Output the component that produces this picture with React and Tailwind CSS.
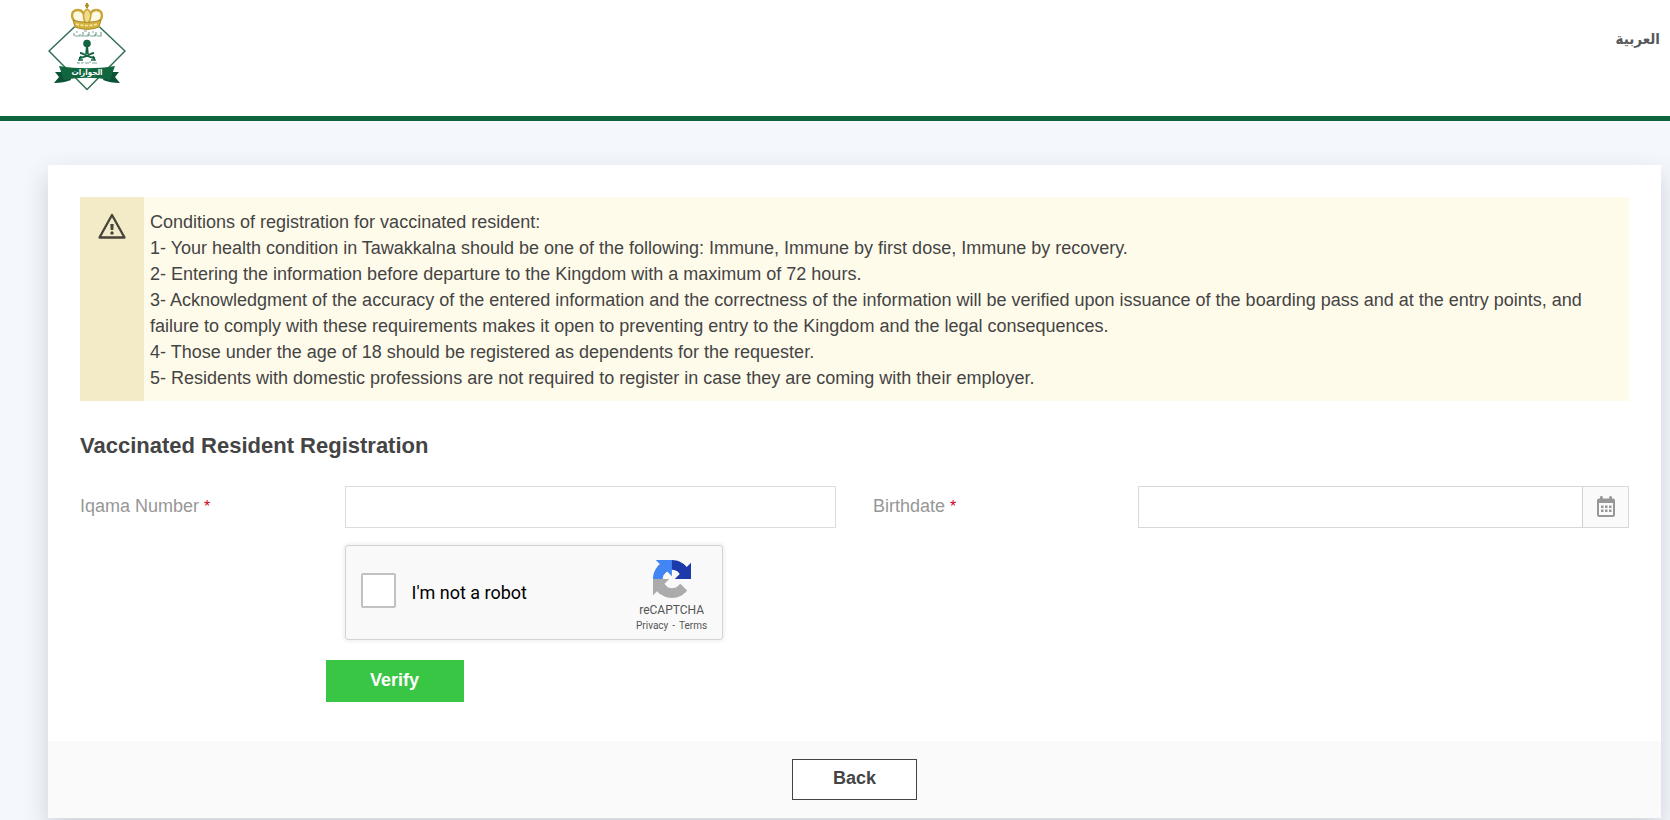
import React from "react";

function Emblem() {
  return (
    <svg viewBox="0 0 78 88" className="h-[88px] w-[78px]" role="img" aria-label="Passports emblem">
      <path d="M39 12 77 48 39 86.500 1 48Z" fill="#fff" stroke="#2f6f52" strokeWidth="1.5" />
      {/* crown */}
      <path d="M26 14h26v10H26Z" fill="#fff" />
      <path d="M28 19c-6-4-5-12 2-12 5 0 7 4 7 12M50 19c6-4 5-12-2-12-5 0-7 4-7 12" fill="#fdf8e2" stroke="#c9a637" strokeWidth="2.4" />
      <path d="M36.500 18c-2-5-1-10 2.500-12 4 2 5 7 2.500 12" fill="#f0dc8a" stroke="#c9a637" strokeWidth="1.600" />
      <path d="M39 0v5M37 2.500h4" stroke="#b28e22" strokeWidth="2" />
      <path d="M25 17c9 3 19 3 28 0l-2 7c-8 3-16 3-24 0Z" fill="#d4b23e" stroke="#a98722" strokeWidth="1" />
      <path d="M28 21c7 2 15 2 22 0" fill="none" stroke="#f6e8a6" strokeWidth="1.6" strokeDasharray="3 1.500" />
      {/* upper inscription */}
      <path d="M26 33v-3M27 33h5v-2M33 33h2v-4M36 33h4v-2M41 33v-4M42 33h5v-2M48 33v-4M49 33h4v-4M28 29h2M36 28h3M44 29h2" fill="none" stroke="#7fa594" strokeWidth="1.200" />
      {/* palm */}
      <circle cx="39" cy="40.500" r="3.800" fill="#12623f" />
      <path d="M38 43h2l.8 8h-3.600Z" fill="#12623f" />
      {/* crossed swords */}
      <path d="M32 50c4 0 8 5 15 5M46 50c-4 0-8 5-15 5" fill="none" stroke="#12623f" strokeWidth="1.800" />
      <path d="M33 53l-2 4h4M45 53l2 4h-4" fill="none" stroke="#12623f" strokeWidth="1.400" />
      {/* lower inscription */}
      <path d="M29 60h3M33 60h2v-1M37 60h4M42 60v-2M44 60h5M30 59v1" fill="none" stroke="#7fa594" strokeWidth="1" />
      {/* ribbon */}
      <path d="M14 69H7l4 5-5 6c7 0 12-1 17-3l-3-8Z" fill="#0c5234" />
      <path d="M64 69h7l-4 5 5 6c-7 0-12-1-17-3l3-8Z" fill="#0c5234" />
      <path d="M11 63c18 3 38 3 56 0l-5 14c-15-3-31-3-46 0Z" fill="#12663f" />
      <text x="39" y="72" textAnchor="middle" fill="#fff" fontSize="8" fontWeight="700" fontFamily="DejaVu Sans Condensed, DejaVu Sans, sans-serif">الجوازات</text>
    </svg>
  );
}

function WarningIcon() {
  return (
    <svg viewBox="0 0 28 26" className="h-[26px] w-7" aria-hidden="true">
      <path d="M14 2 26.500 24.500h-25Z" fill="none" stroke="#45443a" strokeWidth="2.300" strokeLinejoin="round" />
      <path d="M12.300 11h3.400l-.4 6h-2.600Z" fill="#45443a" />
      <circle cx="14" cy="20" r="1.700" fill="#45443a" />
    </svg>
  );
}

function CalendarIcon() {
  return (
    <svg viewBox="0 0 20 22" className="h-[22px] w-5" aria-hidden="true">
      <path fillRule="evenodd" fill="#979797" d="M3 2.500h1V1.400a1.400 1.400 0 0 1 2.800 0V2.500h6.400V1.400a1.400 1.400 0 0 1 2.800 0V2.500h1a2 2 0 0 1 2 2V19a2 2 0 0 1-2 2H3a2 2 0 0 1-2-2V4.500a2 2 0 0 1 2-2ZM3 7v12h14V7Z" />
      <path fill="#979797" d="M5 9.500h2.500V12H5zM9 9.500h2.500V12H9zM13 9.500h2.500V12H13zM5 13.500h2.500V16H5zM9 13.500h2.500V16H9zM13 13.500h2.500V16H13z" />
    </svg>
  );
}

function CaptchaLogo() {
  return (
    <svg viewBox="0 0 64 64" className="h-[38px] w-[38px]" aria-hidden="true">
      <path fill="#1c3aa9" d="M64 31.955l-.033-1.37V4.687l-7.16 7.16C50.948 4.674 42.033.093 32.05.093c-10.4 0-19.622 4.96-25.458 12.64l11.736 11.86a15.55 15.55 0 0 1 4.754-5.334c2.05-1.6 4.952-2.906 8.968-2.906.485 0 .86.057 1.135.163 4.976.393 9.288 3.14 11.828 7.124l-8.307 8.307L64 31.953" />
      <path fill="#4285f4" d="M31.862.094l-1.37.033H4.594l7.16 7.16C4.58 13.147 0 22.06 0 32.046c0 10.4 4.96 19.622 12.64 25.458L24.5 45.768a15.55 15.55 0 0 1-5.334-4.754c-1.6-2.05-2.906-4.952-2.906-8.968 0-.485.057-.86.163-1.135.393-4.976 3.14-9.288 7.124-11.828l8.307 8.307L31.86.095" />
      <path fill="#ababab" d="M.001 32.045l.033 1.37v25.898l7.16-7.16c5.86 7.173 14.774 11.754 24.76 11.754 10.4 0 19.622-4.96 25.458-12.64l-11.736-11.86a15.55 15.55 0 0 1-4.754 5.334c-2.05 1.6-4.952 2.906-8.968 2.906-.485 0-.86-.057-1.135-.163-4.976-.393-9.288-3.14-11.828-7.124l8.307-8.307-31.3.04" />
    </svg>
  );
}

function Label({ htmlFor, children }) {
  return (
    <label htmlFor={htmlFor} className="w-[35%] shrink-0 pt-2 leading-6 text-[#979797]">
      {children} <span className="text-base text-[#d0021b]">*</span>
    </label>
  );
}

const conditions = [
  "1- Your health condition in Tawakkalna should be one of the following: Immune, Immune by first dose, Immune by recovery.",
  "2- Entering the information before departure to the Kingdom with a maximum of 72 hours.",
  "3- Acknowledgment of the accuracy of the entered information and the correctness of the information will be verified upon issuance of the boarding pass and at the entry points, and failure to comply with these requirements makes it open to preventing entry to the Kingdom and the legal consequences.",
  "4- Those under the age of 18 should be registered as dependents for the requester.",
  "5- Residents with domestic professions are not required to register in case they are coming with their employer.",
];

export default function App() {
  return (
    <div className="min-h-screen bg-[#f4f8fd] font-['Liberation_Sans',Arial,sans-serif] text-lg text-[#444]">
      <header className="flex h-[121px] items-start justify-between border-b-5 border-[#0f653b] bg-white pr-[10px] pl-12 pt-[3px]">
        <Emblem />
        <a href="#ar" lang="ar" dir="rtl" className="pt-6 font-['DejaVu_Sans_Condensed','DejaVu_Sans',sans-serif] text-[15px] leading-6 font-bold text-[#58595b]">
          العربية
        </a>
      </header>

      <main className="pt-11 pr-[9px] pb-0.5 pl-12">
        <form className="bg-white shadow-[0_10px_24px_rgba(50,55,65,0.2)]" onSubmit={(e) => e.preventDefault()}>
          <div className="px-8 pt-8 pb-[39px]">
            <section className="flex bg-[#fffbeb]">
              <div className="flex w-16 shrink-0 justify-center bg-[#f3ebc8] pt-4">
                <WarningIcon />
              </div>
              <div className="pt-3 pb-[10px] pr-4 pl-1.5 leading-[26px]">
                <p>Conditions of registration for vaccinated resident:</p>
                {conditions.map((c) => (
                  <p key={c}>{c}</p>
                ))}
              </div>
            </section>

            <h1 className="mt-7 text-[22px] leading-[34px] font-bold">Vaccinated Resident Registration</h1>

            <div className="mt-[23px] grid grid-cols-2 gap-x-[37px]">
              <div className="flex">
                <Label htmlFor="iqama">Iqama Number</Label>
                <input id="iqama" type="text" className="h-[42px] min-w-0 flex-1 border border-[#dcdcdc] bg-white px-3 outline-none" />
              </div>
              <div className="flex">
                <Label htmlFor="birthdate">Birthdate</Label>
                <div className="flex h-[42px] min-w-0 flex-1 border border-[#d8d8d8]">
                  <input id="birthdate" type="text" className="min-w-0 flex-1 bg-white px-3 outline-none" />
                  <button type="button" aria-label="Choose date" className="flex w-[46px] items-center justify-center border-l border-[#d0d0d0] bg-[#fafafa]">
                    <CalendarIcon />
                  </button>
                </div>
              </div>

              <div className="flex flex-col pt-[17px] pl-[35%]">
                <div className="flex h-[95px] w-[378px] items-center rounded-[3px] border border-[#d3d3d3] bg-[#f9f9f9] pl-[15px] font-[Roboto,sans-serif] shadow-[0_0_4px_1px_rgba(0,0,0,0.08)]">
                  <input id="robot" type="checkbox" className="-mt-1 h-[35px] w-[35px] shrink-0 appearance-none rounded-[2px] border-2 border-[#c1c1c1] bg-white" />
                  <label htmlFor="robot" className="grow pl-4 text-lg text-black">I'm not a robot</label>
                  <div className="flex w-[100px] shrink-0 flex-col items-center pt-2 text-[#555]">
                    <CaptchaLogo />
                    <div className="pt-1 text-xs leading-4">reCAPTCHA</div>
                    <div className="text-[10px] leading-4">
                      <a href="#privacy">Privacy</a>
                      <span className="px-1">-</span>
                      <a href="#terms">Terms</a>
                    </div>
                  </div>
                </div>
                <button type="submit" className="-ml-[19px] mt-5 h-[42px] w-[138px] bg-[#39c645] pb-0.5 font-bold text-white">
                  Verify
                </button>
              </div>
            </div>
          </div>

          <footer className="flex justify-center bg-[#fafafa] py-[18px]">
            <button type="button" className="h-[41px] w-[125px] border border-[#444] bg-white pb-1 font-bold text-[#444]">
              Back
            </button>
          </footer>
        </form>
      </main>
    </div>
  );
}
